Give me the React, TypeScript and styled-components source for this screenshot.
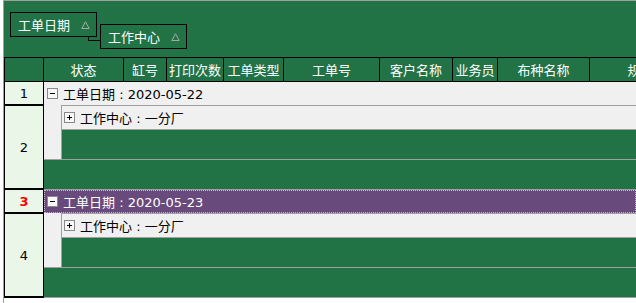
import styled, { createGlobalStyle } from "styled-components";

const GREEN = "#217346";
const LINE = "#a0a0a0";

const COLUMNS = [
  { title: "状态", width: 80 },
  { title: "缸号", width: 43 },
  { title: "打印次数", width: 57 },
  { title: "工单类型", width: 60 },
  { title: "工单号", width: 96 },
  { title: "客户名称", width: 73 },
  { title: "业务员", width: 45 },
  { title: "布种名称", width: 92 },
  { title: "规格", width: 102 },
];

const GROUPS = [
  { no: 1, date: "2020-05-22", center: "一分厂", selected: false },
  { no: 3, date: "2020-05-23", center: "一分厂", selected: true },
];

const GlobalStyle = createGlobalStyle`
  html, body {
    margin: 0;
    padding: 0;
    background: #fff;
    overflow: hidden;
  }
  body {
    font-family: "DejaVu Sans", "Noto Sans CJK SC", sans-serif;
    font-size: 13px;
  }
`;

const Grid = styled.div`
  margin-left: 3px;
  height: 303px;
  border-left: 1px solid ${LINE};
  border-top: 1px solid ${LINE};
  background: #fff;
  overflow: hidden;
`;

const GroupPanel = styled.div`
  display: flex;
  align-items: flex-start;
  gap: 3px;
  height: 56px;
  box-sizing: border-box;
  padding: 11px 0 0 6px;
  background: ${GREEN};
`;

const GroupChip = styled.div<{ $nested?: boolean }>`
  position: relative;
  display: flex;
  align-items: center;
  justify-content: space-between;
  box-sizing: border-box;
  width: 87px;
  height: 25px;
  margin-top: ${(p) => (p.$nested ? "12px" : "0")};
  padding: 0 6px 0 7px;
  border: 1px solid #000;
  color: #fff;

  ${(p) =>
    p.$nested &&
    `
    &::before {
      content: "";
      position: absolute;
      left: -13px;
      top: 12px;
      width: 12px;
      height: 3px;
      border-left: 1px solid #000;
      border-bottom: 1px solid #000;
    }
  `}
`;

const HeaderRow = styled.div`
  display: flex;
  height: 25px;
  box-sizing: border-box;
  border-top: 1px solid #000;
  border-bottom: 1px solid #000;
  background: ${GREEN};
  white-space: nowrap;
`;

const Corner = styled.div`
  flex: none;
  width: 40px;
  box-sizing: border-box;
  border-left: 1px solid #000;
  border-right: 1px solid #000;
`;

const HeaderCell = styled.div<{ $w: number }>`
  flex: none;
  width: ${(p) => p.$w}px;
  box-sizing: border-box;
  display: flex;
  align-items: center;
  justify-content: center;
  border-right: 1px solid #000;
  color: #fff;
  overflow: hidden;
`;

const Band = styled.div`
  display: flex;
`;

const RowHeaders = styled.div`
  flex: none;
  display: flex;
  flex-direction: column;
  width: 40px;
`;

const RowHeader = styled.div<{ $h: number; $current?: boolean }>`
  height: ${(p) => p.$h}px;
  box-sizing: border-box;
  display: flex;
  align-items: center;
  justify-content: center;
  border-left: 1px solid #000;
  border-right: 1px solid #000;
  border-bottom: 2px solid #000;
  background: #eaf6e7;
  color: ${(p) => (p.$current ? "#ff0000" : "#000")};
  font-weight: ${(p) => (p.$current ? 700 : 400)};
`;

const BandContent = styled.div`
  flex: 1;
  min-width: 0;
  display: flex;
  flex-direction: column;
`;

const GroupHeader = styled.div<{ $selected?: boolean }>`
  display: flex;
  align-items: center;
  gap: 5px;
  height: 23px;
  box-sizing: border-box;
  white-space: nowrap;
  background: ${(p) => (p.$selected ? "#684a7c" : "#f0f0f0")};
  color: ${(p) => (p.$selected ? "#fff" : "#000")};
  border: ${(p) => (p.$selected ? "1px dotted #c6b8cf" : "none")};
  padding-left: ${(p) => (p.$selected ? "2px" : "3px")};
`;

const GroupBody = styled.div`
  display: flex;
  background: #f0f0f0;
`;

const Indent = styled.div`
  flex: none;
  width: 17px;
`;

const NestedPanel = styled.div`
  flex: 1;
  border-top: 1px solid ${LINE};
  border-left: 1px solid ${LINE};
`;

const SubHeader = styled.div`
  display: flex;
  align-items: center;
  gap: 5px;
  height: 23px;
  padding-left: 2px;
  border-bottom: 1px solid ${LINE};
  background: #f0f0f0;
  color: #000;
  white-space: nowrap;
`;

const GreenArea = styled.div<{ $lined?: boolean }>`
  height: 29px;
  background: ${GREEN};
  ${(p) =>
    p.$lined &&
    `
    border-top: 1px solid ${LINE};
    border-bottom: 1px solid ${LINE};
  `}
`;

const Expander = styled.span<{ $open?: boolean }>`
  position: relative;
  flex: none;
  width: 11px;
  height: 11px;
  box-sizing: border-box;
  border: 1px solid #8a8a8a;
  background: #f7f7f7;

  &::before {
    content: "";
    position: absolute;
    left: 2px;
    top: 4px;
    width: 5px;
    height: 1px;
    background: #000;
  }

  ${(p) =>
    !p.$open &&
    `
    &::after {
      content: "";
      position: absolute;
      left: 4px;
      top: 2px;
      width: 1px;
      height: 5px;
      background: #000;
    }
  `}
`;

function SortGlyph() {
  return (
    <svg width="9" height="8" viewBox="0 0 9 8">
      <polygon
        points="4.5,0.8 8.2,7.5 0.8,7.5"
        fill="none"
        stroke="#a8a8a8"
        strokeWidth="1"
      />
    </svg>
  );
}

export default function App() {
  return (
    <>
      <GlobalStyle />
      <Grid>
        <GroupPanel>
          <GroupChip>
            工单日期
            <SortGlyph />
          </GroupChip>
          <GroupChip $nested>
            工作中心
            <SortGlyph />
          </GroupChip>
        </GroupPanel>

        <HeaderRow>
          <Corner />
          {COLUMNS.map((c) => (
            <HeaderCell key={c.title} $w={c.width}>
              {c.title}
            </HeaderCell>
          ))}
        </HeaderRow>

        {GROUPS.map((g) => (
          <Band key={g.no}>
            <RowHeaders>
              <RowHeader $h={24} $current={g.selected}>
                {g.no}
              </RowHeader>
              <RowHeader $h={84}>{g.no + 1}</RowHeader>
            </RowHeaders>
            <BandContent>
              <GroupHeader $selected={g.selected}>
                <Expander $open />
                工单日期 : {g.date}
              </GroupHeader>
              <GroupBody>
                <Indent />
                <NestedPanel>
                  <SubHeader>
                    <Expander />
                    工作中心 : {g.center}
                  </SubHeader>
                  <GreenArea />
                </NestedPanel>
              </GroupBody>
              <GreenArea $lined />
            </BandContent>
          </Band>
        ))}
      </Grid>
    </>
  );
}
